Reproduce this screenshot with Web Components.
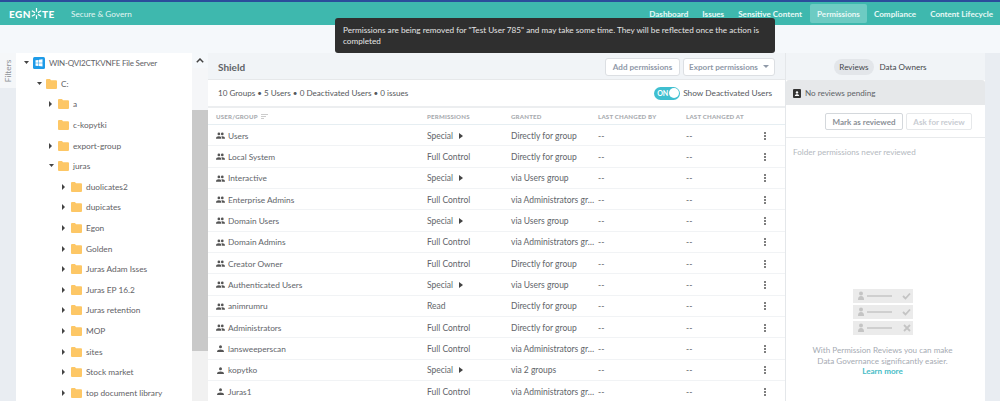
<!DOCTYPE html>
<html><head><meta charset="utf-8"><title>Egnyte</title>
<style>html,body{margin:0;height:401px;overflow:hidden;font-family:Lato,"Open Sans",sans-serif}</style>
</head><body>
<eg-app></eg-app>
<script>
const FONT='font-family:Lato,"Open Sans",sans-serif;';
class Base extends HTMLElement{
  constructor(){super();this.attachShadow({mode:'open'});}
}
class EgHeader extends Base{
  connectedCallback(){this.shadowRoot.innerHTML=`<style>
  :host{display:flex;align-items:center;height:23px;background:#3eb8ae;border-top:2px solid #2b4c9b;color:#fff;${FONT}font-size:8px;padding-left:9px}
  .logo{font-weight:900;font-size:10px;letter-spacing:.5px;width:62px;display:flex;align-items:center}
  .sub{color:#e2f5f3;font-size:8.200px}
  nav{margin-left:auto;display:flex;align-items:stretch;height:19px}
  a{display:flex;align-items:center;padding:0 7px;font-weight:700;color:#e8f8f6;white-space:nowrap;font-size:8.100px}
  a.gap{margin-right:1px}
  a.on{background:#6dcbc3;border-radius:2px}
  </style>
  <div class="logo">EGN<svg width="11" height="11" viewBox="0 0 10 10" stroke="#fff" stroke-width="1.100"><path d="M5 0v3.500M5 6.500V10M.7 2.500l3 1.700M6.300 5.800l3 1.700M.7 7.500l3-1.700M6.300 4.200l3-1.700"/></svg>TE</div>
  <div class="sub">Secure &amp; Govern</div>
  <nav><a>Dashboard</a><a>Issues</a><a class="gap">Sensitive Content</a><a class="on">Permissions</a><a>Compliance</a><a>Content Lifecycle</a></nav>`;}
}
class EgToast extends Base{
  connectedCallback(){this.shadowRoot.innerHTML=`<style>
  :host{position:absolute;left:335px;top:18px;width:440px;height:35px;box-sizing:border-box;background:#2f2f2f;border-radius:3px;color:#e4e4e4;${FONT}font-size:8.200px;line-height:11px;padding:7px 8px}
  </style><slot></slot>`;}
}
class EgTreeRow extends Base{
  connectedCallback(){
    const lvl=+this.getAttribute('level'),arrow=this.getAttribute('arrow'),win=this.hasAttribute('win');
    const a=arrow==='down'?'<path d="M0 1h5L2.500 4z"/>':arrow==='right'?'<path d="M0 0l3 3-3 3z"/>':'';
    const icon=win?`<svg class="i" width="12" height="12" viewBox="0 0 12 12"><rect width="12" height="12" rx="1.500" fill="#1e9be8"/><path fill="#fff" d="M2.500 3.300l3-.4v2.800h-3zM6 2.800l3.500-.5v3.400H6zM2.500 6.200h3v2.900l-3-.4zM6 6.200h3.500v3.400L6 9.100z"/></svg>`
    :`<svg class="i" width="11" height="10" viewBox="0 0 11 10"><path fill="#fdc766" d="M0 1a1 1 0 0 1 1-1h3l1 1.300h5a1 1 0 0 1 1 1V9a1 1 0 0 1-1 1H1a1 1 0 0 1-1-1z"/></svg>`;
    this.shadowRoot.innerHTML=`<style>
    :host{display:flex;align-items:center;flex:none;height:20.600px;padding-left:${lvl}px;color:#5f6266;${FONT}font-size:${win?'8px':'8.300px'};letter-spacing:${win?'-.2px':'0'};white-space:nowrap}
    .a{width:6px;height:6px;margin-right:3px;fill:#444;flex:none}
    .i{flex:none;margin-right:4px}
    </style><svg class="a" viewBox="0 0 6 6">${a}</svg>${icon}<slot></slot>`;}
}
class EgTree extends Base{
  connectedCallback(){
    const rows=[[8,'down','WIN-QVI2CTKVNFE File Server',1],[21,'down','C:'],[33,'right','a'],[33,'','c-kopytki'],[33,'right','export-group'],[33,'down','juras'],[46,'right','duolicates2'],[46,'right','dupicates'],[46,'right','Egon'],[46,'right','Golden'],[46,'right','Juras Adam Isses'],[46,'right','Juras EP 16.2'],[46,'right','Juras retention'],[46,'right','MOP'],[46,'right','sites'],[46,'right','Stock market'],[46,'right','top document library']];
    this.shadowRoot.innerHTML=`<style>
    :host{display:flex;flex-direction:column;background:#fff;overflow:hidden}
    </style>`+rows.map(r=>`<eg-tree-row level="${r[0]}" arrow="${r[1]}" ${r[3]?'win':''}>${r[2]}</eg-tree-row>`).join('');}
}
const COLS='grid-template-columns:219px 84px 87px 88px 1fr 20px;padding-right:10px;';
class EgPermRow extends Base{
  connectedCallback(){
    const g=this.dataset;
    const ic=g.t==='u'
     ?`<svg width="9" height="7" viewBox="0 0 9 7" fill="#555"><circle cx="4.500" cy="1.700" r="1.500"/><path d="M1 7c0-2 1.500-2.600 3.500-2.600S8 5 8 7z"/></svg>`
     :`<svg width="9" height="7" viewBox="0 0 10 7" fill="#555"><circle cx="3.200" cy="1.800" r="1.500"/><circle cx="7" cy="1.800" r="1.500"/><path d="M0 7c0-2 1.200-2.700 3.200-2.700S6 5 6 7zM6.800 7c0-1-.2-1.800-.9-2.500 2-.5 4.100.3 4.100 2.500z"/></svg>`;
    const tri=g.p==='Special'?`<svg width="4" height="6" viewBox="0 0 4 6"><path d="M0 0l4 3-4 3z" fill="#444"/></svg>`:'';
    this.shadowRoot.innerHTML=`<style>
    :host{display:grid;${COLS}flex:none;align-items:center;height:21.330px;box-sizing:border-box;border-bottom:1px solid #f1f3f5;color:#62656a;${FONT}font-size:8.500px;white-space:nowrap;padding-top:1px}
    .n{display:flex;align-items:center;gap:3px;padding-left:8px;font-size:8.300px}
    .p{display:flex;align-items:center;gap:6px}
    .dots{display:flex;flex-direction:column;gap:1px;align-items:center}
    .dots i{width:2px;height:2px;background:#555;border-radius:50%}
    </style><div class="n">${ic}<span>${g.n}</span></div><div class="p"><span>${g.p}</span>${tri}</div><div>${g.g}</div><div>--</div><div>--</div><div class="dots"><i></i><i></i><i></i></div>`;}
}
class EgMain extends Base{
  connectedCallback(){
    const A='via Administrators gr…';
    const d=[['Users','Special','Directly for group','g'],['Local System','Full Control','Directly for group','g'],['Interactive','Special','via Users group','g'],['Enterprise Admins','Full Control',A,'g'],['Domain Users','Special','via Users group','g'],['Domain Admins','Full Control',A,'g'],['Creator Owner','Full Control','Directly for group','g'],['Authenticated Users','Special','via Users group','g'],['animrumru','Read','Directly for group','g'],['Administrators','Full Control','Directly for group','g'],['lansweeperscan','Full Control',A,'u'],['kopytko','Special','via 2 groups','u'],['Juras1','Full Control',A,'u']];
    this.shadowRoot.innerHTML=`<style>
    :host{display:flex;flex-direction:column;background:#fff;${FONT}font-size:8.500px;color:#62656a;overflow:hidden;border-right:1px solid #e4e7ea}
    .top{flex:none;height:27px;box-sizing:border-box;background:#f1f4f7;border-bottom:1px solid #e6e8ea;display:flex;align-items:center;padding:1px 10px 0;gap:3px}
    .top b{margin-right:auto;font-size:10px;color:#5f6367;font-weight:700}
    .btn{height:18px;box-sizing:border-box;border:1px solid #dcdfe3;border-radius:3px;background:#fff;display:flex;align-items:center;justify-content:center;color:#8f99a8;font-weight:700;font-size:8.100px;white-space:nowrap;gap:5px}
    .caret{width:0;height:0;border:3px solid transparent;border-top-color:#8f99a8;border-bottom:0}
    .sum{flex:none;height:28px;box-sizing:border-box;border-bottom:2px solid #eceef0;display:flex;align-items:center;padding:0 13px 0 10px;color:#55585c}
    .sum span{margin-right:auto;font-size:8.100px}
    .tog{width:26px;height:13px;border-radius:7px;background:#3fbfd0;display:flex;align-items:center;justify-content:space-between;padding:0 1.500px 0 3px;box-sizing:border-box;color:#fff;font-size:7px;font-weight:700;margin-right:3px}
    .tog i{width:10px;height:10px;background:#fff;border-radius:50%}
    .th{flex:none;display:grid;${COLS}height:17px;align-items:center;border-bottom:1px solid #e6eef2;color:#a9acb0;font-size:6.100px;font-weight:900;letter-spacing:.2px;box-sizing:border-box}
    .th div:first-child{padding-left:8px;display:flex;gap:3px;align-items:center}
    .show{font-size:8.300px}
    </style>
    <div class="top"><b>Shield</b><div class="btn" style="width:75px">Add permissions</div><div class="btn" style="width:92px">Export permissions<i class="caret"></i></div></div>
    <div class="sum"><span>10 Groups • 5 Users • 0 Deactivated Users • 0 issues</span><div class="tog">ON<i></i></div><div class="show">Show Deactivated Users</div></div>
    <div class="th"><div>USER/GROUP <svg width="7" height="5" viewBox="0 0 7 5" fill="#ccc"><path d="M0 0h7v1H0zM0 2h5v1H0zM0 4h3v1H0z"/></svg></div><div>PERMISSIONS</div><div>GRANTED</div><div>LAST CHANGED BY</div><div>LAST CHANGED AT</div><div></div></div>
    `+d.map(r=>`<eg-perm-row data-n="${r[0]}" data-p="${r[1]}" data-g="${r[2]}" data-t="${r[3]}"></eg-perm-row>`).join('');}
}
class EgReviews extends Base{
  connectedCallback(){
    const row=(y,x)=>`<rect x="0" y="${y}" width="60" height="14" fill="#ebebeb"/><circle cx="8" cy="${y+4.500}" r="2" fill="#c4c4c4"/><path d="M5 ${y+11}c0-3 1-4 3-4s3 1 3 4z" fill="#c4c4c4"/><rect x="14" y="${y+6}" width="25" height="2" fill="#cfcfcf"/>`+(x?`<path d="M51 ${y+4}l6 6M57 ${y+4}l-6 6" stroke="#c4c4c4" stroke-width="1.800"/>`:`<path d="M50 ${y+7}l2.500 2.500L57 ${y+4.500}" stroke="#c4c4c4" stroke-width="1.800" fill="none"/>`);
    this.shadowRoot.innerHTML=`<style>
    :host{display:flex;flex-direction:column;${FONT}font-size:8.100px;background:#fff;color:#6a6d72;overflow:hidden}
    .tabs{height:27px;flex:none;box-sizing:border-box;padding-right:10px;background:#f1f4f7;display:flex;align-items:center;justify-content:center;gap:6px;color:#44474b}
    .tabs span{padding:0 5px;height:16px;display:flex;align-items:center}
    .tabs .on{background:#e3e6ea;border-radius:8px}
    .tabs .t2{padding:0}
    .bar{height:25px;flex:none;box-sizing:border-box;padding:1px 0 0 7px;background:#e6e8ea;display:flex;align-items:center;gap:4px;border-radius:3px 3px 0 0;color:#606367}
    .acts{height:33px;flex:none;box-sizing:border-box;padding:1px 13px 0 0;border-bottom:1px solid #e8eaec;display:flex;align-items:center;justify-content:flex-end;gap:3px}
    .b{height:17px;box-sizing:border-box;border:1px solid #d4d8dc;border-radius:2px;display:flex;align-items:center;justify-content:center;color:#8a8f96;font-weight:700;font-size:8px;white-space:nowrap}
    .b.off{color:#c8ccd2;border-color:#e6e8ea}
    .note{padding:9px 7px 0;color:#b4b9c0;height:151px;flex:none;box-sizing:border-box}
    .ill{display:flex;justify-content:center;padding-right:6px}
    p{margin:10px 0 0;padding-right:6px;text-align:center;color:#a6abb3;line-height:10.500px}
    a{color:#46bcc6;display:block;font-weight:700}
    </style>
    <div class="tabs"><span class="on">Reviews</span><span class="t2">Data Owners</span></div>
    <div class="bar"><svg width="8" height="9" viewBox="0 0 8 9"><rect width="8" height="9" rx="1" fill="#333"/><circle cx="4" cy="3.400" r="1.200" fill="#fff"/><path d="M1.800 7c0-1.300 1-1.800 2.200-1.800s2.200.5 2.200 1.800z" fill="#fff"/></svg><span>No reviews pending</span></div>
    <div class="acts"><div class="b" style="width:78px">Mark as reviewed</div><div class="b off" style="width:66px">Ask for review</div></div>
    <div class="note">Folder permissions never reviewed</div>
    <div class="ill"><svg width="60" height="46" viewBox="0 0 60 46">${row(0)}${row(16)}${row(32,1)}</svg></div>
    <p>With Permission Reviews you can make<br>Data Governance significantly easier.<a>Learn more</a></p>`;}
}
class EgScroll extends Base{
  connectedCallback(){this.shadowRoot.innerHTML=`<style>
  :host{display:flex;flex-direction:column;background:#f1f1f1;overflow:hidden}
  .up{height:15px;display:flex;align-items:center;justify-content:center;background:#f5f8fb;flex:none}
  .track{height:42px;flex:none;background:#f5f6f8}
  .thumb{height:241px;flex:none;background:#c9c9c9}
  </style><div class="up"><svg width="8" height="5" viewBox="0 0 8 5"><path d="M.8 4.200L4 1l3.200 3.200" stroke="#444" stroke-width="1.500" fill="none"/></svg></div><div class="track"></div><div class="thumb"></div>`;}
}
class EgFilters extends Base{
  connectedCallback(){this.shadowRoot.innerHTML=`<style>
  :host{display:block;background:#e9edf2}
  .tab{height:35px;background:#f5f7f9;display:flex;align-items:center;justify-content:center}
  span{transform:rotate(-90deg);${FONT}font-size:8.300px;color:#8b8f95;white-space:nowrap}
  </style><div class="tab"><span>Filters</span></div>`;}
}
class EgApp extends Base{
  connectedCallback(){this.shadowRoot.innerHTML=`<style>
  :host{display:block;position:relative;width:1000px;height:401px;background:#e9edf2;overflow:hidden}
  .sub{height:28px;background:#f5f8fb}
  .body{display:grid;grid-template-columns:16px 176px 16px 578px 199px 15px;height:348px}
  </style>
  <eg-header></eg-header><div class="sub"></div>
  <div class="body"><eg-filters></eg-filters><eg-tree></eg-tree><eg-scroll></eg-scroll><eg-main></eg-main><eg-reviews></eg-reviews><div></div></div>
  <eg-toast>Permissions are being removed for "Test User 785" and may take some time. They will be reflected once the action is completed</eg-toast>`;}
}
[['eg-header',EgHeader],['eg-toast',EgToast],['eg-tree-row',EgTreeRow],['eg-tree',EgTree],['eg-perm-row',EgPermRow],['eg-main',EgMain],['eg-reviews',EgReviews],['eg-scroll',EgScroll],['eg-filters',EgFilters],['eg-app',EgApp]].forEach(([n,c])=>customElements.define(n,c));
</script>
</body></html>
